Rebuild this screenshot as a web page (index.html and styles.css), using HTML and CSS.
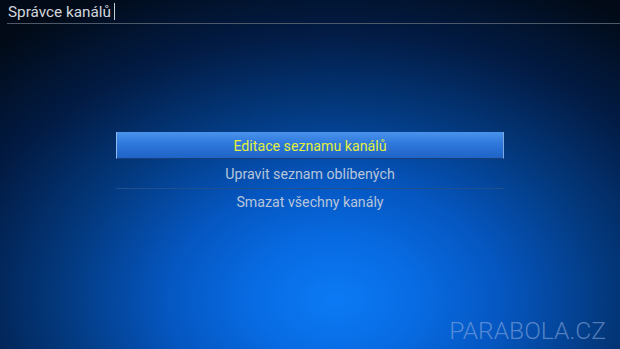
FILE: index.html
```html
<!DOCTYPE html>
<html lang="cs">
<head>
    <meta charset="UTF-8">
    <title>Správce kanálů</title>
    <link rel="stylesheet" href="styles.css">
</head>
<body>
    <div class="screen">
        <div class="header">
            <span class="header-title">Správce kanálů</span><span class="caret"></span>
        </div>
        <div class="menu">
            <div class="menu-item selected">Editace seznamu kanálů</div>
            <div class="menu-item">Upravit seznam oblíbených</div>
            <div class="menu-item">Smazat všechny kanály</div>
        </div>
        <div class="watermark">PARABOLA.CZ</div>
    </div>
</body>
</html>
```

FILE: styles.css
```css
html, body {
    margin: 0;
    padding: 0;
}
.screen {
    width: 620px;
    height: 349px;
    overflow: hidden;
    font-family: Roboto, "Liberation Sans", sans-serif;
    background: radial-gradient(ellipse 80% 100% at 54% 86%, #0b7af4 0%, #086ce4 16%, #0556c0 34%, #03397e 55%, #021c46 76%, #010a16 100%);
    display: flex;
    flex-direction: column;
}
.header {
    margin-left: 7px;
    height: 23px;
    border-bottom: 1px solid #4d5868;
    display: flex;
    align-items: center;
    padding-left: 1px;
}
.header-title {
    font-size: 15.3px;
    color: #d3d7dd;
}
.caret {
    width: 1px;
    height: 17px;
    background: #c8ccd2;
    margin-left: 3px;
}
.menu {
    width: 388px;
    margin: 108px auto 0;
    display: flex;
    flex-direction: column;
}
.menu-item {
    height: 28px;
    line-height: 29px;
    text-align: center;
    font-size: 14.2px;
    color: #b7c5d9;
}
.menu-item + .menu-item + .menu-item {
    border-top: 1px solid #1e4f8e;
    line-height: 27px;
}
.menu-item.selected {
    height: 27px;
    line-height: 28px;
    color: #e2ef3c;
    background: linear-gradient(#4a93ec, #2e78dc 45%, #1f63c6);
    border-left: 1px solid #8fb8ee;
    border-right: 1px solid #7da8e0;
    border-bottom: 1px solid #173e7a;
    box-sizing: border-box;
    margin-bottom: 1px;
}
.watermark {
    margin-top: auto;
    align-self: flex-end;
    margin-right: 14px;
    margin-bottom: 4px;
    font-size: 24.6px;
    font-weight: 300;
    color: rgba(150, 180, 225, 0.55);
}
```
